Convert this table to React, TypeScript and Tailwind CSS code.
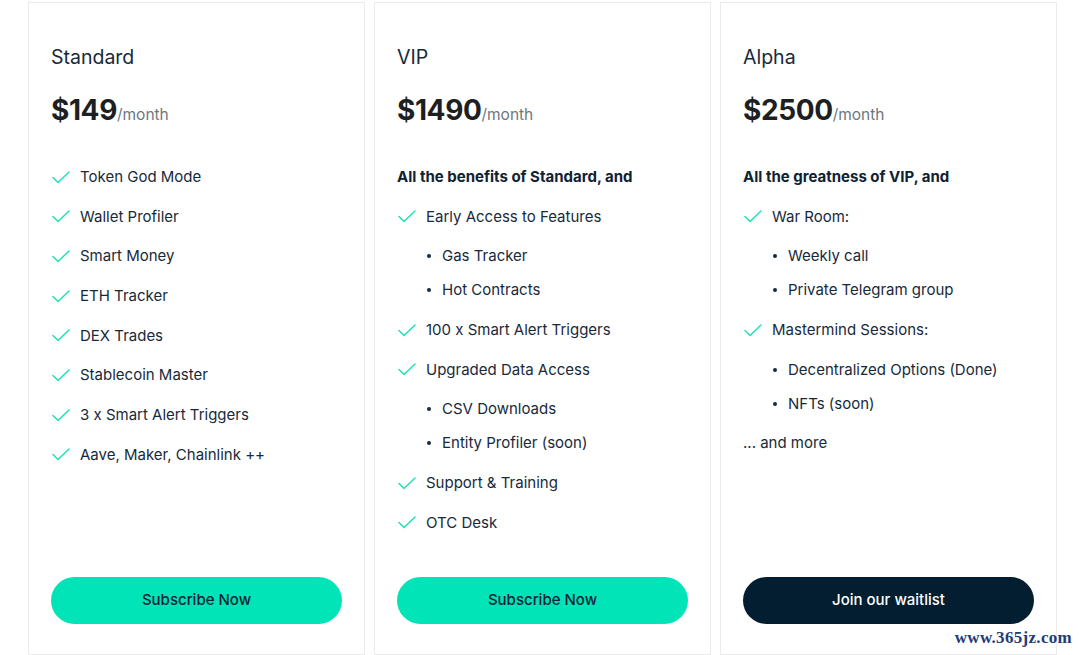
import React from 'react';

type Feature = {
  label: string;
  sub?: string[];
};

type Plan = {
  name: string;
  price: string;
  intro?: string;
  features: Feature[];
  more?: string;
  cta: string;
  dark?: boolean;
};

const plans: Plan[] = [
  {
    name: 'Standard',
    price: '$149',
    features: [
      { label: 'Token God Mode' },
      { label: 'Wallet Profiler' },
      { label: 'Smart Money' },
      { label: 'ETH Tracker' },
      { label: 'DEX Trades' },
      { label: 'Stablecoin Master' },
      { label: '3 x Smart Alert Triggers' },
      { label: 'Aave, Maker, Chainlink ++' },
    ],
    cta: 'Subscribe Now',
  },
  {
    name: 'VIP',
    price: '$1490',
    intro: 'All the benefits of Standard, and',
    features: [
      { label: 'Early Access to Features', sub: ['Gas Tracker', 'Hot Contracts'] },
      { label: '100 x Smart Alert Triggers' },
      { label: 'Upgraded Data Access', sub: ['CSV Downloads', 'Entity Profiler (soon)'] },
      { label: 'Support & Training' },
      { label: 'OTC Desk' },
    ],
    cta: 'Subscribe Now',
  },
  {
    name: 'Alpha',
    price: '$2500',
    intro: 'All the greatness of VIP, and',
    features: [
      { label: 'War Room:', sub: ['Weekly call', 'Private Telegram group'] },
      { label: 'Mastermind Sessions:', sub: ['Decentralized Options (Done)', 'NFTs (soon)'] },
    ],
    more: '... and more',
    cta: 'Join our waitlist',
    dark: true,
  },
];

const Check = () => (
  <svg width="18" height="13" viewBox="0 0 18 13" fill="none" className="flex-shrink-0">
    <polyline points="1,6.5 6,11.5 17,1" stroke="#1ee3b6" strokeWidth="1.5" strokeLinecap="round" strokeLinejoin="round" />
  </svg>
);

const PlanCard: React.FC<{ plan: Plan }> = ({ plan }) => (
  <div className="w-[337px] h-[653px] flex-shrink-0 border border-[#ebebeb] bg-white flex flex-col px-[22px] pt-[40px] pb-[30px]">
    <h3 className="text-[19.5px] leading-[28px] text-[#172a3a]">{plan.name}</h3>
    <div className="mt-[21px] flex items-baseline h-[36px]">
      <span className="text-[28px] leading-[36px] font-bold text-[#1d1f22] tracking-[-0.4px]">{plan.price}</span>
      <span className="text-[15.5px] text-[#6e7780]">/month</span>
    </div>

    <div className="mt-[37px] flex flex-col gap-[15.7px] text-[15px] leading-[24px] text-[#172a3a]">
      {plan.intro && <p className="font-bold text-[#0f2233]">{plan.intro}</p>}
      {plan.features.map((f) => (
        <div key={f.label}>
          <div className="flex items-center">
            <span className="w-[29px] pl-[1px] flex items-center">
              <Check />
            </span>
            <span>{f.label}</span>
          </div>
          {f.sub && (
            <ul className="mt-[15.7px] flex flex-col gap-[10px]">
              {f.sub.map((s) => (
                <li key={s} className="flex items-center">
                  <span className="ml-[30px] w-[4px] h-[4px] rounded-full bg-[#172a3a]" />
                  <span className="ml-[11px]">{s}</span>
                </li>
              ))}
            </ul>
          )}
        </div>
      ))}
      {plan.more && <p>{plan.more}</p>}
    </div>

    <div className="flex-1" />

    <button
      className={
        plan.dark
          ? 'h-[47px] w-full rounded-full bg-[#031e31] text-white text-[15px] font-medium'
          : 'h-[47px] w-full rounded-full bg-[#00e4b8] text-[#0b2235] text-[15px] font-medium'
      }
    >
      {plan.cta}
    </button>
  </div>
);

export default function App() {
  return (
    <div
      className="relative w-[1080px] h-[655px] bg-white overflow-hidden"
      style={{ fontFamily: 'Inter, "Noto Sans", sans-serif' }}
    >
      <div className="flex gap-[9px] pl-[28px] pt-[2px]">
        {plans.map((p) => (
          <PlanCard key={p.name} plan={p} />
        ))}
      </div>
      <span
        className="absolute right-[8px] bottom-[5px] text-[17px] font-bold text-[#1f3c7a] tracking-[0.3px]"
        style={{ fontFamily: '"Liberation Serif", serif' }}
      >
        www.365jz.com
      </span>
    </div>
  );
}
